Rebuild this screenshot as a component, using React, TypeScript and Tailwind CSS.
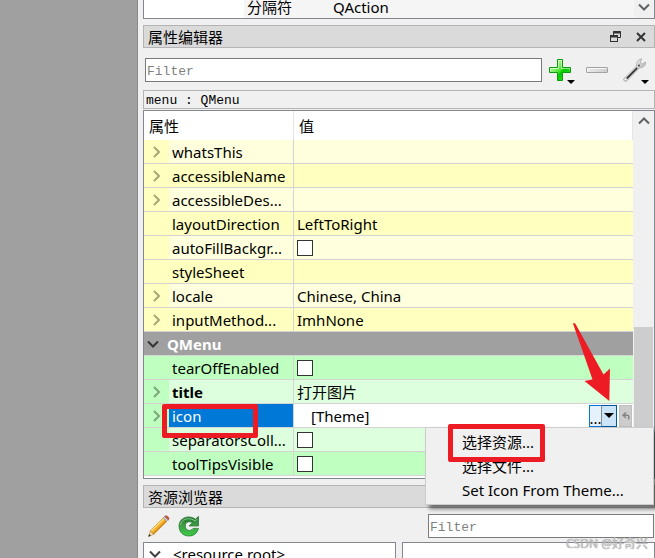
import type { ReactNode } from "react";
import clsx from "clsx";

interface Property {
    name: string
    value?: string
    checkbox?: boolean
    expandable?: boolean
    bold?: boolean
}

const widgetProperties: Property[] = [
    { name: "whatsThis", expandable: true },
    { name: "accessibleName", expandable: true },
    { name: "accessibleDes...", expandable: true },
    { name: "layoutDirection", value: "LeftToRight" },
    { name: "autoFillBackgr...", checkbox: true },
    { name: "styleSheet" },
    { name: "locale", value: "Chinese, China", expandable: true },
    { name: "inputMethod...", value: "ImhNone", expandable: true },
];

const menuProperties: Property[] = [
    { name: "tearOffEnabled", checkbox: true },
    { name: "title", value: "打开图片", expandable: true, bold: true },
];

const menuPropertiesAfterIcon: Property[] = [
    { name: "separatorsColl...", checkbox: true },
    { name: "toolTipsVisible", checkbox: true },
];

function Chevron({ direction, className }: { direction: "right" | "down" | "up"; className?: string }) {
    const paths = {
        right: "M3 1 L8 6 L3 11",
        down: "M1 3.5 L6 8.5 L11 3.5",
        up: "M1 8.5 L6 3.5 L11 8.5",
    };
    return (
        <svg viewBox="0 0 12 12" className={clsx("size-3 shrink-0", className)} fill="none" stroke="currentColor" strokeWidth="2">
            <path d={paths[direction]} />
        </svg>
    );
}

function PlusIcon() {
    return (
        <svg viewBox="0 0 22 22" className="size-[22px]">
            <defs>
                <linearGradient id="plus" x1="0" y1="0" x2="1" y2="1">
                    <stop offset="0.15" stopColor="#d2f8c4" />
                    <stop offset="0.5" stopColor="#4be62f" />
                    <stop offset="0.6" stopColor="#00c800" />
                    <stop offset="1" stopColor="#4ee63c" />
                </linearGradient>
            </defs>
            <path d="M8.5 .5h5v8h8v5h-8v8h-5v-8h-8v-5h8z" fill="url(#plus)" stroke="#0a9c0a" strokeLinejoin="round" />
            <path d="M9.5 9.5v-8h3v8h8v1.500" fill="none" stroke="#e2ffd8" strokeOpacity=".6" />
            <path d="M1.500 12v-2.500h8" fill="none" stroke="#e2ffd8" strokeOpacity=".8" />
        </svg>
    );
}

function MinusIcon() {
    return (
        <svg viewBox="0 0 22 22" className="size-[22px]">
            <defs>
                <linearGradient id="minus" x1="0" y1="0" x2="1" y2="0">
                    <stop offset="0" stopColor="#ececec" />
                    <stop offset="1" stopColor="#cdcdcd" />
                </linearGradient>
            </defs>
            <rect x=".5" y="8.500" width="21" height="5" rx=".5" fill="url(#minus)" stroke="#a2a2a2" />
            <path d="M1.500 12.500v-3h19" fill="none" stroke="#f8f8f8" />
        </svg>
    );
}

function WrenchIcon() {
    return (
        <svg viewBox="0 0 24 24" className="size-6">
            <defs>
                <linearGradient id="wrench" x1="0" y1="0" x2="1" y2="1">
                    <stop offset="0.2" stopColor="#fafafa" />
                    <stop offset="0.8" stopColor="#a8a8a8" />
                </linearGradient>
            </defs>
            <path
                d="M.700 20.800 L13.400 8.200 C12.800 4.500 15 1.300 18.800 .8 L17.200 4 L19 6.200 L22.400 4 C23.200 7 20.500 9.800 16.600 9.800 L4 22.700 C2.300 24.200 -.3 22.300 .7 20.800z"
                fill="url(#wrench)"
                stroke="#a0a0a0"
                strokeWidth=".7"
            />
            <path d="M4.300 19.800 L13.600 10.400" stroke="#2e2e2e" strokeWidth="1.700" strokeLinecap="round" />
            <path d="M3.200 19 L12.800 9.500" stroke="#dcdcdc" strokeWidth=".8" />
            <circle cx="16" cy="7.500" r="1" fill="#444" />
            <circle cx="2.500" cy="21.500" r=".8" fill="#fff" />
        </svg>
    );
}

function PencilIcon() {
    return (
        <svg viewBox="0 0 22 22" className="size-[22px]">
            <path d="M.500 21.500 L2.300 15.800 L5.800 19.300z" fill="#f0d9a8" stroke="#a08048" strokeWidth=".5" />
            <path d="M.300 21.700 L1.200 19 L3 20.800z" fill="#333" />
            <path d="M2.300 15.800 L15.200 2.800 L18.800 6.400 L5.800 19.300z" fill="#f5b02c" stroke="#b87412" strokeWidth=".7" />
            <path d="M3.200 16 L15.700 3.600" stroke="#ffdf80" strokeWidth="1.400" />
            <path d="M5.400 18.300 L18 5.800" stroke="#cf7e12" strokeWidth="1" />
            <path d="M15.200 2.800 L16.700 1.300 L20.300 4.900 L18.800 6.400z" fill="#c9ccd2" stroke="#858a92" strokeWidth=".5" />
            <path d="M16.700 1.300 C18 -.2 22.800 2.500 20.300 4.900z" fill="#c9583e" stroke="#9a3c28" strokeWidth=".5" />
        </svg>
    );
}

function ReloadIcon() {
    return (
        <svg viewBox="0 0 22 22" className="size-[22px]">
            <defs>
                <linearGradient id="reload" x1="0" y1="0" x2="0" y2="1">
                    <stop offset="0" stopColor="#1f6e28" />
                    <stop offset="0.45" stopColor="#3f9c48" />
                    <stop offset="1" stopColor="#3ccb45" />
                </linearGradient>
            </defs>
            <path
                d="M20.500 1.300 V11 H11 L14.300 7.800 C12 5.800 7.300 6.500 7.300 11 C7.300 15.800 12.500 16.800 15 13.400 H20.500 C19 18.500 15.600 21 11 21 C5 21 1 17 1 11 C1 3 10.500 -1 17.500 4.300z"
                fill="url(#reload)"
                stroke="#1c7426"
                strokeWidth=".7"
            />
            <path d="M2.500 10 C3.500 3.500 11.500 1.800 17.300 6 L19.500 3.800" fill="none" stroke="#8fd095" strokeWidth=".9" />
        </svg>
    );
}

function DropTriangle({ className }: { className?: string }) {
    return (
        <svg viewBox="0 0 8 4" className={clsx("h-1 w-2", className)}>
            <path d="M0 0h8L4 4z" fill="#000" />
        </svg>
    );
}

function DockTitle({ title, children }: { title: string; children?: ReactNode }) {
    return (
        <div className="flex h-[23px] items-center border border-[#b4b4b4] bg-[#dadada] pr-2 pl-1">
            <h2 className="grow">{title}</h2>
            {children}
        </div>
    );
}

function ToolButton({ label, menu, children }: { label: string; menu?: boolean; children: ReactNode }) {
    return (
        <button aria-label={label} className="relative flex h-6 w-[37px] items-center pl-[7px]">
            {children}
            {menu && <DropTriangle className="absolute right-1 -bottom-0.5" />}
        </button>
    );
}

function NameCell({ property, light, tone, selected }: { property: Property; light: boolean; tone: "yellow" | "green"; selected?: boolean }) {
    const dark = tone === "yellow" ? "bg-[#ffffbf]" : "bg-[#bfffbf]";
    const pale = tone === "yellow" ? "bg-[#ffffdd]" : "bg-[#ddffdd]";
    return (
        <td className="border-r border-b border-[#d4d4d4] p-0">
            <div className={clsx("flex h-[23px]", dark)}>
                <span className={clsx("flex w-[25px] shrink-0 items-center pl-[7px]", tone === "yellow" ? "text-[#a6a678]" : "text-[#7da67d]")}>
                    {property.expandable && <Chevron direction="right" />}
                </span>
                <span
                    className={clsx(
                        "flex grow items-center pl-[3px] whitespace-nowrap",
                        selected ? "bg-[#0078d7] text-white" : light && pale,
                        property.bold && "font-bold"
                    )}
                >
                    {property.name}
                </span>
            </div>
        </td>
    );
}

function PropertyRow({ property, light, tone }: { property: Property; light: boolean; tone: "yellow" | "green" }) {
    const dark = tone === "yellow" ? "bg-[#ffffbf]" : "bg-[#bfffbf]";
    const pale = tone === "yellow" ? "bg-[#ffffdd]" : "bg-[#ddffdd]";
    return (
        <tr>
            <NameCell property={property} light={light} tone={tone} />
            <td className={clsx("border-b border-[#d4d4d4] p-0", light ? pale : dark)}>
                <div className="flex h-[23px] items-center pl-[3px]">
                    {property.checkbox ? (
                        <input type="checkbox" aria-label={property.name} className="size-4 appearance-none border border-[#333] bg-white" />
                    ) : (
                        property.value
                    )}
                </div>
            </td>
        </tr>
    );
}

function IconMenu() {
    return (
        <div role="menu" className="absolute top-[23px] -right-[21px] w-[229px] border border-[#ccc] bg-[#f0f0f0] py-0.5 shadow-[4px_4px_4px_rgba(0,0,0,0.5)]">
            {["选择资源...", "选择文件...", "Set Icon From Theme..."].map((item) => (
                <button key={item} role="menuitem" className="flex h-6 w-full items-center pl-9 whitespace-nowrap">
                    {item}
                </button>
            ))}
        </div>
    );
}

function IconRow() {
    return (
        <tr>
            <NameCell property={{ name: "icon", expandable: true }} light={false} tone="green" selected />
            <td className="relative border-b border-[#d4d4d4] bg-white p-0">
                <div className="flex h-[23px] items-center pr-px pl-[17px]">
                    <span className="grow">[Theme]</span>
                    <button className="flex h-[22px] w-3 items-end justify-center border border-r-0 border-[#0078d7] bg-[#e5f1fb] leading-4">...</button>
                    <button aria-label="选择图标" className="flex h-[22px] w-4 items-center justify-center border border-[#005499] border-l-[#8a8a8a] bg-[#cce4f7]">
                        <svg viewBox="0 0 10 5" className="h-[5px] w-[10px]">
                            <path d="M0 0h10L5 5z" />
                        </svg>
                    </button>
                    <button aria-label="重置" className="ml-0.5 flex h-[22px] w-[13px] items-center justify-center border border-[#bfbfbf] bg-[#ccc]">
                        <svg viewBox="0 0 8 8" className="size-2" fill="none" stroke="#858585" strokeWidth="1.500">
                            <path d="M4 .5 L1 3.200 L4 6M1 3.200H5.500C7 3.200 7 5 6.500 7.500" />
                        </svg>
                    </button>
                </div>
                <IconMenu />
                {/* Marcações em vermelho */}
                <div className="absolute top-0 -left-[132px] h-[34px] w-24 rounded-xs border-[5px] border-[#ed1c24]" />
                <div className="absolute top-5 right-[88px] h-[38px] w-[97px] rounded-xs border-[5px] border-[#ed1c24]" />
                <svg viewBox="0 0 40 80" className="absolute -top-[82px] right-[21px] h-20 w-10">
                    <path d="M1 1.500 Q2 .5 3.500 2 L31.500 52.500 L38 46.500 L37.300 79 L12.500 59 L20.500 57.500z" fill="#ed1c24" />
                </svg>
            </td>
        </tr>
    );
}

function PropertyTable() {
    return (
        <div className="mt-px flex border border-[#828790] bg-white pb-0.5">
            <table className="grow table-fixed border-separate border-spacing-0">
                <thead>
                    <tr className="h-[29px] text-left">
                        <th className="w-[150px] border-r border-[#e5e5e5] p-0 pl-[5px] font-normal">属性</th>
                        <th className="border-r border-[#e5e5e5] p-0 pl-[5px] font-normal">值</th>
                    </tr>
                </thead>
                <tbody>
                    {widgetProperties.map((property, i) => (
                        <PropertyRow key={property.name} property={property} light={i % 2 === 0} tone="yellow" />
                    ))}
                    <tr>
                        <td colSpan={2} className="border-b border-[#d4d4d4] bg-[#a0a0a0] p-0">
                            <div className="flex h-[23px] items-center gap-2 pl-[3px] font-bold text-white">
                                <Chevron direction="down" className="text-[#333]" />
                                QMenu
                            </div>
                        </td>
                    </tr>
                    {menuProperties.map((property, i) => (
                        <PropertyRow key={property.name} property={property} light={i % 2 === 1} tone="green" />
                    ))}
                    <IconRow />
                    {menuPropertiesAfterIcon.map((property, i) => (
                        <PropertyRow key={property.name} property={property} light={i % 2 === 0} tone="green" />
                    ))}
                </tbody>
            </table>
            <div className="flex w-[21px] flex-col bg-[#f0f0f0] pl-px">
                <button aria-label="向上" className="flex h-5 items-center justify-center text-[#606060]">
                    <Chevron direction="up" />
                </button>
                <div className="grow" />
                <div className="mr-px h-[129px] bg-[#cdcdcd]" />
                <button aria-label="向下" className="flex h-5 items-center justify-center text-[#606060]">
                    <Chevron direction="down" />
                </button>
            </div>
        </div>
    );
}

function FilterInput({ className }: { className?: string }) {
    return (
        <input
            type="text"
            aria-label="Filter"
            placeholder="Filter"
            className={clsx("h-6 min-w-0 border border-[#7a7a7a] bg-white px-px pt-0.5 font-['Liberation_Mono',monospace] text-[13px] placeholder:text-[#808080]", className)}
        />
    );
}

export default function App() {
    return (
        <div className="relative flex h-screen overflow-hidden bg-[#f0f0f0] font-['Noto_Sans','Noto_Sans_CJK_SC',sans-serif] text-[15px] leading-5 text-black">
            <div className="w-[138px] shrink-0 border-r border-[#8a8a8a] bg-[#a0a0a0]" />
            <main className="min-w-0 grow pl-[5px]">
                {/* Editor de ações */}
                <div className="flex h-[19px] items-end border border-t-0 border-[#828790] bg-white">
                    <div className="w-[100px] shrink-0" />
                    <div className="flex h-[18px] grow items-center bg-[#f5f5f5] pb-1 pl-[3px]">
                        <span className="w-[86px]">分隔符</span>
                        <span>QAction</span>
                    </div>
                    <button aria-label="向下" className="flex h-[18px] w-5 items-center justify-center bg-[#f0f0f0] pb-1 text-[#606060]">
                        <Chevron direction="down" />
                    </button>
                </div>

                {/* Editor de propriedades */}
                <section className="mt-1.5">
                    <DockTitle title="属性编辑器">
                        <button aria-label="浮动" className="mr-[15px]">
                            <svg viewBox="0 0 11 11" className="size-[11px]" fill="none" stroke="#333">
                                <path d="M3.500 4V.5h7v6H8" />
                                <path d="M3 1.500h8" strokeWidth="2" />
                                <rect x=".5" y="4.500" width="7" height="6" />
                                <path d="M0 5.500h8" strokeWidth="2" />
                            </svg>
                        </button>
                        <button aria-label="关闭">
                            <svg viewBox="0 0 10 10" className="size-[10px]" stroke="#333" strokeWidth="2">
                                <path d="M1 1l8 8M9 1l-8 8" />
                            </svg>
                        </button>
                    </DockTitle>
                    <div className="flex items-center pt-2.5 pr-0.5 pb-2 pl-0.5">
                        <FilterInput className="grow" />
                        <ToolButton label="添加" menu>
                            <PlusIcon />
                        </ToolButton>
                        <ToolButton label="删除">
                            <MinusIcon />
                        </ToolButton>
                        <ToolButton label="设置" menu>
                            <WrenchIcon />
                        </ToolButton>
                    </div>
                    <div className="flex h-[19px] items-center border border-[#b4b4b4] pt-0.5 pl-0.5 font-['Liberation_Mono',monospace] text-[13px]">menu : QMenu</div>
                    <PropertyTable />
                </section>

                {/* Navegador de recursos */}
                <section className="mt-1.5">
                    <DockTitle title="资源浏览器" />
                    <div className="flex items-center gap-2 pt-1.5 pr-px pb-1 pl-[5px]">
                        <button aria-label="编辑资源">
                            <PencilIcon />
                        </button>
                        <button aria-label="重新加载">
                            <ReloadIcon />
                        </button>
                        <FilterInput className="ml-auto w-[226px]" />
                    </div>
                    <div className="flex gap-1.5">
                        <div className="flex h-10 w-[253px] shrink-0 items-start gap-3 border border-[#828790] bg-white pt-px pl-[5px]">
                            <Chevron direction="down" className="mt-1 text-[#404040]" />
                            <span>&lt;resource root&gt;</span>
                        </div>
                        <div className="h-10 grow border border-[#828790] bg-white" />
                    </div>
                </section>
            </main>
            <span className="absolute right-[7px] bottom-1 text-xs leading-5 text-[#c8c8c8] [text-shadow:0_0_1px_#777]">CSDN @好奇兴</span>
        </div>
    );
}
